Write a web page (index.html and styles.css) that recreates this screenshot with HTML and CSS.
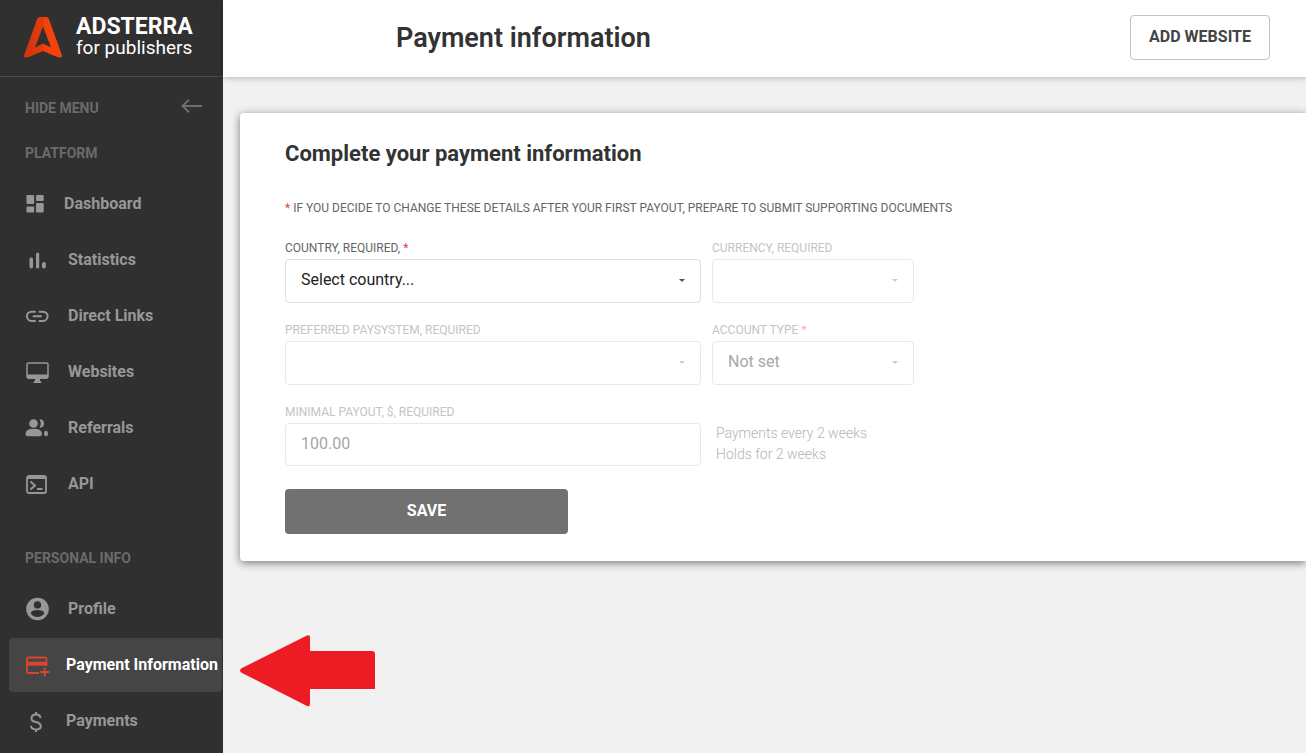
FILE: index.html
```html
<!DOCTYPE html>
<html lang="en">
<head>
<meta charset="utf-8">
<meta name="viewport" content="width=device-width, initial-scale=1">
<title>Payment information</title>
<link rel="stylesheet" href="styles.css">
</head>
<body>
<div class="app">
  <aside class="sidebar">
    <a class="brand" href="#">
      <svg class="brand-mark" width="38" height="41" viewBox="0 0 38 41" aria-hidden="true">
        <defs>
          <linearGradient id="mark" x1="0" y1="0" x2="1" y2="0">
            <stop offset="0" stop-color="#cf3410"/>
            <stop offset="0.5" stop-color="#e63c0a"/>
            <stop offset="0.55" stop-color="#f4420a"/>
            <stop offset="1" stop-color="#f4420a"/>
          </linearGradient>
        </defs>
        <path fill="url(#mark)" fill-rule="evenodd" d="M15.500 0h7q1.600 0 2.200 1.500L37.700 37.500q1 3-1.700 3-2 0-4-1L19 34 6 39.500q-2 1-4 1-2.700 0-1.700-3L13.300 1.500Q13.900 0 15.500 0ZM19 9.500 11 30.500 19 26.500l8 4Z"/>
      </svg>
      <span class="brand-text">
        <span class="brand-name">ADSTERRA</span>
        <span class="brand-sub">for publishers</span>
      </span>
    </a>
    <button class="hide-menu" type="button">
      <span>HIDE MENU</span>
      <svg width="22" height="14" viewBox="0 0 22 14" fill="none" stroke="#6e6e6e" stroke-width="2" aria-hidden="true"><path d="M21 7H1.500M8 .8 1.500 7 8 13.200"/></svg>
    </button>
    <nav>
      <h2 class="nav-title">PLATFORM</h2>
      <ul class="nav-list">
        <li><a class="nav-item tight" href="#"><svg viewBox="0 0 24 24" fill="#979797" aria-hidden="true"><rect x="1.500" y="3" width="7.700" height="9" rx="1"/><rect x="11" y="3" width="7.700" height="6" rx="1"/><rect x="1.500" y="14.500" width="7.700" height="6" rx="1"/><rect x="11" y="11" width="7.700" height="9.500" rx="1"/></svg>Dashboard</a></li>
        <li><a class="nav-item" href="#"><svg viewBox="0 0 24 24" fill="#979797" aria-hidden="true"><rect x="4.500" y="9.500" width="3.500" height="11" rx="1.700"/><rect x="11" y="4.500" width="3.200" height="16" rx="1.600"/><rect x="17" y="14" width="3.800" height="6.500" rx="1.700"/></svg>Statistics</a></li>
        <li><a class="nav-item" href="#"><svg viewBox="0 0 24 24" fill="none" stroke="#979797" stroke-width="2" stroke-linecap="round" aria-hidden="true"><path d="M10 7.700H6.500a4.600 4.600 0 0 0 0 9.200H10M14.500 7.700h3.500a4.600 4.600 0 0 1 0 9.200h-3.500M8.500 12.300h7.500"/></svg>Direct Links</a></li>
        <li><a class="nav-item" href="#"><svg viewBox="0 0 24 24" aria-hidden="true"><rect x="2" y="3" width="21" height="15" rx="1.500" fill="none" stroke="#979797" stroke-width="1.500"/><path fill="#979797" d="M2 14.500h21V17q0 1.700-1.500 1.700h-6.500v2l1.500 1.300v1H8.500v-1l1.500-1.300v-2H3.500Q2 18.700 2 17Z"/></svg>Websites</a></li>
        <li><a class="nav-item" href="#"><svg viewBox="0 0 24 24" fill="#979797" aria-hidden="true"><circle cx="8.500" cy="7.500" r="4.300"/><path d="M0.500 18q0-5.200 8.200-5.200T17 18q0 2.200-2 2.200H2.500q-2 0-2-2.200ZM14.500 3.300q4.500 0 4.500 4.200t-4.500 4.200q1.200-2 1.200-4.200T14.500 3.300Z"/><ellipse cx="21" cy="17.500" rx="2" ry="2.700"/></svg>Referrals</a></li>
        <li><a class="nav-item" href="#"><svg viewBox="0 0 24 24" fill="none" stroke="#979797" aria-hidden="true"><rect x="2" y="4" width="19" height="17" rx="2" stroke-width="1.800"/><path stroke-width="3" d="M2.500 5.500h18"/><path stroke-width="2" d="m5.500 9.500 4.500 4L5.500 17.500M12 17h5.500"/></svg>API</a></li>
      </ul>
      <h2 class="nav-title personal">PERSONAL INFO</h2>
      <ul class="nav-list">
        <li><a class="nav-item" href="#"><svg viewBox="0 0 24 24" aria-hidden="true"><path fill="#979797" fill-rule="evenodd" d="M12.500.7a11.300 11.300 0 1 0 0 22.600 11.300 11.300 0 0 0 0-22.600Zm0 3.500a3.700 3.700 0 1 1 0 7.400 3.700 3.700 0 0 1 0-7.400Zm0 15.700q-4.500 0-7-3.700 1.500-3.300 7-3.300t7 3.300q-2.500 3.700-7 3.700Z"/></svg>Profile</a></li>
        <li><a class="nav-item near active" href="#" aria-current="page"><svg viewBox="0 0 24 24" fill="none" stroke="#db4431" aria-hidden="true"><path stroke-width="1.800" d="M14 20H3.500q-1.500 0-1.500-1.500V6q0-1.500 1.500-1.500H20q1.500 0 1.500 1.500v7"/><path stroke-width="4" d="M2 10.700h20"/><path stroke-width="2" d="M19.700 14.500v9M15.200 19h9"/></svg>Payment Information</a></li>
        <li><a class="nav-item near" href="#"><svg viewBox="0 0 24 24" fill="none" stroke="#979797" stroke-width="2" aria-hidden="true"><path d="M15.500 9q-.3-3.500-4.500-3.500T6.500 9t4.500 4q4.800 1.200 4.800 4.200 0 3.300-4.800 3.300T6 16.800M11 3v3M11 20v3"/></svg>Payments</a></li>
      </ul>
    </nav>
  </aside>

  <div class="page">
    <header class="topbar">
      <h1>Payment information</h1>
      <button class="add-site" type="button">ADD WEBSITE</button>
    </header>
    <main>
      <section class="card">
        <h2>Complete your payment information</h2>
        <p class="notice"><span class="star">*</span> IF YOU DECIDE TO CHANGE THESE DETAILS AFTER YOUR FIRST PAYOUT, PREPARE TO SUBMIT SUPPORTING DOCUMENTS</p>
        <form class="form">
          <div class="field">
            <label for="country">COUNTRY, REQUIRED, <span class="star">*</span></label>
            <div class="select"><select id="country"><option>Select country...</option></select></div>
          </div>
          <div class="field off">
            <label for="currency">CURRENCY, REQUIRED</label>
            <div class="select"><select id="currency" disabled><option></option></select></div>
          </div>
          <div class="field off">
            <label for="paysystem">PREFERRED PAYSYSTEM, REQUIRED</label>
            <div class="select"><select id="paysystem" disabled><option></option></select></div>
          </div>
          <div class="field off">
            <label for="account">ACCOUNT TYPE <span class="star">*</span></label>
            <div class="select"><select id="account" disabled><option>Not set</option></select></div>
          </div>
          <div class="field off">
            <label for="payout">MINIMAL PAYOUT, $, REQUIRED</label>
            <input id="payout" type="text" value="100.00" disabled>
          </div>
          <p class="terms">Payments every 2 weeks<br>Holds for 2 weeks</p>
          <button class="save" type="submit">SAVE</button>
        </form>
      </section>
      <svg class="pointer" width="136" height="72" viewBox="0 0 136 72" aria-hidden="true"><path fill="#ed1c24" d="M0 35.500Q0 34 2 33L67 .5Q70-.5 70 2V16h62q3 0 3 3v35H70v15q0 3-3 2L2 38Q0 37 0 35.500Z"/></svg>
    </main>
  </div>
</div>
</body>
</html>
```
FILE: styles.css
```css
* { box-sizing: border-box; }

body {
  margin: 0;
  font-family: Roboto, "Liberation Sans", sans-serif;
  color: #333;
  background: #f1f1f1;
}

h1, h2, p, ul { margin: 0; padding: 0; }
ul { list-style: none; }
a { color: inherit; text-decoration: none; }
button { font-family: inherit; cursor: pointer; }

.app {
  display: flex;
  height: 100vh;
  overflow: hidden;
}

/* Sidebar */
.sidebar {
  flex: 0 0 223px;
  background: #303030;
  overflow: hidden;
}

.brand {
  display: flex;
  align-items: flex-start;
  gap: 14px;
  height: 77px;
  padding: 17px 0 0 24px;
  border-bottom: 1px solid #4a4a4a;
  color: #fff;
}

.brand-mark { flex: none; }

.brand-text {
  display: flex;
  flex-direction: column;
  white-space: nowrap;
}

.brand-name {
  font-size: 23px;
  line-height: 20px;
  font-weight: 700;
}

.brand-sub {
  font-size: 19px;
  line-height: 22px;
}

.hide-menu {
  display: flex;
  align-items: center;
  justify-content: space-between;
  width: 100%;
  height: 58px;
  padding: 0 20px 0 25px;
  border: 0;
  background: none;
}

.hide-menu, .nav-title {
  font-size: 14px;
  line-height: 18px;
  font-weight: 700;
  color: #6b6b6b;
}

.hide-menu span { padding-top: 4px; }

.nav-title { padding: 9px 25px 15px; }
.nav-title.personal { padding-top: 38px; }

.nav-list {
  display: flex;
  flex-direction: column;
  gap: 2px;
}

.nav-item {
  display: flex;
  align-items: center;
  gap: 19px;
  height: 54px;
  margin: 0 1px 0 9px;
  padding: 0 0 2px 16px;
  border-radius: 4px;
  font-size: 16px;
  font-weight: 700;
  color: #979797;
  white-space: nowrap;
}

.nav-item svg {
  flex: none;
  width: 24px;
  height: 24px;
  margin-top: 2px;
  overflow: visible;
}

.nav-item.tight { gap: 15px; }
.nav-item.near { gap: 17px; }
.nav-item.active { background: #454545; color: #fff; }

/* Top bar */
.page {
  flex: 1;
  min-width: 0;
}

.topbar {
  display: flex;
  align-items: center;
  justify-content: space-between;
  height: 77px;
  padding: 0 36px 2px 173px;
  background: #fff;
  box-shadow: 0 1px 6px rgba(0, 0, 0, 0.25);
}

.topbar h1 {
  font-size: 27px;
  line-height: 32px;
  font-weight: 600;
}

.add-site {
  height: 45px;
  padding: 0 18px 2px;
  border: 1px solid #c3c3c3;
  border-radius: 4px;
  background: #fff;
  font-size: 16px;
  font-weight: 700;
  color: #444;
}

/* Card */
main { padding: 36px 0 0 17px; }

.card {
  padding: 27px 45px;
  border-radius: 4px 0 0 4px;
  background: #fff;
  box-shadow: 0 2px 8px rgba(0, 0, 0, 0.5);
}

.card h2 {
  font-size: 22px;
  line-height: 28px;
  font-weight: 700;
}

.notice {
  padding: 32px 0 25px;
  font-size: 12px;
  line-height: 16px;
  color: #666;
}

.star { color: #cf4a4a; }

.form {
  display: grid;
  grid-template-columns: 416px 202px;
  column-gap: 11px;
  row-gap: 20px;
}

.field {
  display: flex;
  flex-direction: column;
  gap: 4px;
}

.field label {
  font-size: 12px;
  line-height: 14px;
  color: #666;
}

.select { position: relative; }

.select::after {
  content: "";
  position: absolute;
  top: 20px;
  right: 16px;
  border: 3px solid transparent;
  border-top-color: #555;
  border-bottom: 0;
  pointer-events: none;
}

.field select, .field input {
  display: block;
  width: 100%;
  height: 44px;
  padding: 0 15px 3px;
  border: 1px solid #e0e0e0;
  border-radius: 4px;
  background: #fff;
  appearance: none;
  font-family: Roboto, "Liberation Sans", sans-serif;
  font-size: 16px;
  color: #222;
  opacity: 1;
}

.field.off label { color: #c4c4c4; }
.field.off .star { color: #f0b8a8; }
.field.off select, .field.off input { border-color: #e9e9e9; color: #a6a6a6; }
.field.off .select::after { border-top-color: #ccc; }

.field input { height: 43px; }

.terms {
  padding: 18px 0 0 4px;
  font-size: 14px;
  line-height: 21px;
  font-weight: 300;
  color: #b5b5b5;
}

.save {
  width: 283px;
  height: 45px;
  margin-top: 3px;
  padding: 0 0 2px;
  border: 0;
  border-radius: 4px;
  background: #717171;
  font-size: 16px;
  font-weight: 700;
  color: #fff;
}

.pointer {
  display: block;
  margin-top: 74px;
}
```
